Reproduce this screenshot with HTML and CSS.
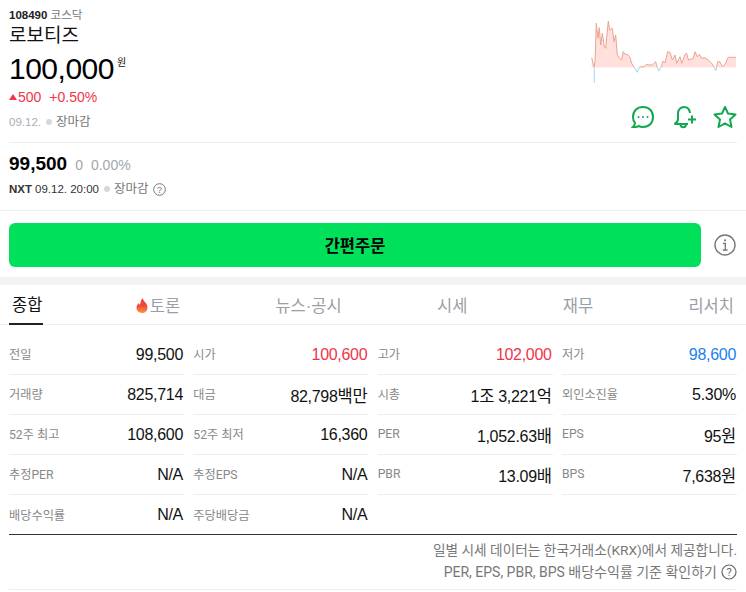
FILE: index.html
```html
<!DOCTYPE html>
<html lang="ko">
<head>
    <meta charset="UTF-8">
    <meta name="viewport" content="width=device-width, initial-scale=1.0">
    <title>로보티즈</title>
    <link rel="stylesheet" href="styles.css">
</head>
<body>

<section class="quote">
    <div class="quote-top">
        <div class="quote-info">
            <div class="code-line"><b>108490</b> <span>코스닥</span></div>
            <h1 class="stock-name">로보티즈</h1>
            <div class="price-line"><span class="price">100,000</span><span class="won">원</span></div>
            <div class="change-line"><i class="arrow-up"></i>500<span class="change-rate">+0.50%</span></div>
            <div class="status-line">09.12.<i class="dot"></i><span>장마감</span></div>
        </div>
        <div class="quote-side">
            <svg class="spark" width="146" height="64" viewBox="0 0 146 64">
                <path fill="#ffe0dc" d="M0.7 37.7 L3 47 L4 41.700 L5.300 3.300 L7 18.300 L8.300 7.700 L9.700 25 L11.300 13.300 L13.300 26.700 L14.700 28.300 L17.300 1 L18.700 10 L21.300 8.300 L23 21.700 L24.700 15 L26.300 35 L28.700 38.300 L30.700 40 L32.300 31.700 L34 34.300 L36.300 34.300 L38.700 36.700 L40.700 43.300 L43.300 47.500 L48 47.500 L50 46.700 L53 47 L55.300 44.300 L58 45 L61.300 45 L64.700 41.700 L66.300 47.500 L70 47.500 L72 41 L74 43 L76.700 31.700 L79 32.300 L81.300 40 L84 35 L85.700 43.300 L89 36.700 L90.700 43.300 L94 34.300 L95.700 33.300 L97.300 40 L102.300 38.300 L104 31.700 L106.300 36.700 L108.300 34.300 L110.700 38.300 L114 37.700 L117.300 40 L120.700 43.300 L123.300 47.500 L125.500 47.500 L126.700 41.700 L129 41.700 L131.300 46.700 L134 44.300 L137.300 37.300 L145 37.300 L145 47.500 L0.7 47.500 Z"/>
                <path fill="none" stroke="#eba58e" stroke-width="1" d="M0.7 37.7 L3 47 L4 41.700 L5.300 3.300 L7 18.300 L8.300 7.700 L9.700 25 L11.300 13.300 L13.300 26.700 L14.700 28.300 L17.300 1 L18.700 10 L21.300 8.300 L23 21.700 L24.700 15 L26.300 35 L28.700 38.300 L30.700 40 L32.300 31.700 L34 34.300 L36.300 34.300 L38.700 36.700 L40.700 43.300 L43.300 47.500 M48 47.500 L50 46.700 L53 47 L55.300 44.300 L58 45 L61.300 45 L64.700 41.700 L66.300 47.500 M70 47.500 L72 41 L74 43 L76.700 31.700 L79 32.300 L81.300 40 L84 35 L85.700 43.300 L89 36.700 L90.700 43.300 L94 34.300 L95.700 33.300 L97.300 40 L102.300 38.300 L104 31.700 L106.300 36.700 L108.300 34.300 L110.700 38.300 L114 37.700 L117.300 40 L120.700 43.300 L123.300 47.500 M125.500 47.500 L126.700 41.700 L129 41.700 L131.300 46.700 L134 44.300 L137.300 37.300 L145 37.300"/>
                <path fill="none" stroke="#a6d3f7" stroke-width="1" d="M3.300 47.500 L3.300 63 M43.300 47.500 L45 50 L46.300 52.300 L48 47.500 M66.300 47.500 L68 51 L69 49 L70 47.500 M123.300 47.500 L125 50.500 L125.500 47.500"/>
            </svg>
            <div class="quote-icons">
                <svg width="24" height="24" viewBox="0 0 24 24" fill="none" stroke="#12a84f" stroke-width="2">
                    <path d="M12 2 C6 2 2 6 2 12 C2 15 3 17 4 18 C4 20 3 21 2 22 C5 22 7 22 8 21 C9 22 11 22 12 22 C18 22 22 18 22 12 C22 6 18 2 12 2 Z"/>
                    <circle cx="7.500" cy="12" r="1" fill="#12a84f" stroke="none"/><circle cx="12" cy="12" r="1" fill="#12a84f" stroke="none"/><circle cx="16.500" cy="12" r="1" fill="#12a84f" stroke="none"/>
                </svg>
                <svg class="icon-bell" width="24" height="24" viewBox="0 0 24 24" fill="none" stroke="#12a84f" stroke-width="2">
                    <path d="M17 8 C16.500 4 14 2 11 2 C7.500 2 5 5 5 8.500 L5 14 C5 16.500 3.500 18 1.500 19 L15 19"/>
                    <path d="M7.500 19.500 C7.500 23 13 23 13 19.500"/>
                    <path d="M15 14.500 L23 14.500 M19 10.500 L19 18.500"/>
                </svg>
                <svg class="icon-star" width="24" height="24" viewBox="0 0 24 24" fill="none" stroke="#12a84f" stroke-width="2" stroke-linejoin="round">
                    <path d="M12 2 L15 8.500 L22.500 9.500 L17 14.500 L18.500 22 L12 18.300 L5.500 22 L7 14.500 L1.500 9.500 L9 8.500 Z"/>
                </svg>
            </div>
        </div>
    </div>
    <div class="nxt">
        <div class="nxt-price"><b>99,500</b><span>0</span><span>0.00%</span></div>
        <div class="nxt-status"><b>NXT</b> 09.12. 20:00<i class="dot"></i><span>장마감</span>
            <svg class="help" width="13" height="13" viewBox="0 0 13 13"><circle cx="6.500" cy="6.500" r="5.800" fill="none" stroke="#777" stroke-width="1"/><text x="6.500" y="9.500" text-anchor="middle" class="help-mark">?</text></svg>
        </div>
    </div>
</section>

<section class="order">
    <button class="order-btn">간편주문</button>
    <svg width="22" height="22" viewBox="0 0 22 22"><circle cx="11" cy="11" r="10" fill="none" stroke="#777" stroke-width="1.400"/><path fill="none" stroke="#777" stroke-width="1.300" d="M9 9.500 L11.300 9.500 L11.300 16 M8.800 16 L13.600 16"/><circle cx="11" cy="6.300" r="1.100" fill="#777"/></svg>
</section>

<nav class="tabs">
    <a class="tab active">종합</a>
    <a class="tab"><svg class="flame" width="12" height="15" viewBox="0 0 12 15"><defs><linearGradient id="flame" x1="0" y1="0" x2="0" y2="1"><stop offset="0.500" stop-color="#f2453b"/><stop offset="1" stop-color="#f79a3c"/></linearGradient></defs><path fill="url(#flame)" d="M6.500 0 C7 3 11.500 5 11.500 9.500 C11.500 13 9 15 6 15 C3 15 .5 13 .5 9.800 C.5 7.500 2 6 2.800 5 C3 6 3.500 6.500 4 6.800 C4.500 4.500 5 2 6.500 0 Z"/></svg>토론</a>
    <a class="tab">뉴스·공시</a>
    <a class="tab">시세</a>
    <a class="tab">재무</a>
    <a class="tab">리서치</a>
</nav>

<section class="stats">
    <div class="stat"><span>전일</span><b>99,500</b></div>
    <div class="stat"><span>시가</span><b class="up">100,600</b></div>
    <div class="stat"><span>고가</span><b class="up">102,000</b></div>
    <div class="stat"><span>저가</span><b class="down">98,600</b></div>
    <div class="stat"><span>거래량</span><b>825,714</b></div>
    <div class="stat"><span>대금</span><b>82,798<em>백만</em></b></div>
    <div class="stat"><span>시총</span><b>1<em>조</em> 3,221<em>억</em></b></div>
    <div class="stat"><span>외인소진율</span><b>5.30%</b></div>
    <div class="stat"><span>52주 최고</span><b>108,600</b></div>
    <div class="stat"><span>52주 최저</span><b>16,360</b></div>
    <div class="stat"><span>PER</span><b>1,052.63<em>배</em></b></div>
    <div class="stat"><span>EPS</span><b>95<em>원</em></b></div>
    <div class="stat"><span>추정PER</span><b>N/A</b></div>
    <div class="stat"><span>추정EPS</span><b>N/A</b></div>
    <div class="stat"><span>PBR</span><b>13.09<em>배</em></b></div>
    <div class="stat"><span>BPS</span><b>7,638<em>원</em></b></div>
    <div class="stat last"><span>배당수익률</span><b>N/A</b></div>
    <div class="stat last"><span>주당배당금</span><b>N/A</b></div>
</section>

<footer class="notes">
    <p>일별 시세 데이터는 한국거래소(KRX)에서 제공합니다.</p>
    <p class="notes-basis">PER, EPS, PBR, BPS 배당수익률 기준 확인하기
        <svg width="16" height="16" viewBox="0 0 16 16"><circle cx="8" cy="8" r="7" fill="none" stroke="#666" stroke-width="1.200"/><text x="8" y="12" text-anchor="middle" class="note-mark">?</text></svg>
    </p>
</footer>

</body>
</html>
```

FILE: styles.css
```css
* {
    box-sizing: border-box;
}

body {
    margin: 0;
    background: #fff;
    color: #111;
    font-family: "Liberation Sans", "Noto Sans CJK KR", sans-serif;
    height: 592px;
    overflow: hidden;
}

.quote {
    padding: 0 9px;
    height: 211px;
    border-bottom: 1px solid #eceef0;
}

.quote-top {
    display: flex;
    justify-content: space-between;
    height: 143px;
    border-bottom: 1px solid #eceef0;
}

.code-line {
    font-size: 11.500px;
    line-height: 14px;
    padding-top: 8px;
    color: #222;
}

.code-line b {
    font-weight: 700;
}

.code-line span {
    color: #777;
}

.stock-name {
    margin: 1px 0 0;
    font-size: 19px;
    font-weight: 400;
    line-height: 26px;
    color: #111;
}

.price-line {
    display: flex;
    align-items: flex-start;
    margin-top: 2px;
}

.price {
    font-size: 30px;
    line-height: 36px;
    letter-spacing: -0.5px;
    color: #000;
}

.won {
    font-size: 10px;
    line-height: 14px;
    margin: 5px 0 0 3px;
}

.change-line {
    display: flex;
    align-items: center;
    margin-top: 1px;
    font-size: 14px;
    line-height: 18px;
    color: #f0354a;
}

.arrow-up {
    width: 0;
    height: 0;
    border-left: 4px solid transparent;
    border-right: 4px solid transparent;
    border-bottom: 6px solid #f0354a;
    margin: 0 1px 0 0;
}

.change-rate {
    margin-left: 8px;
}

.status-line {
    display: flex;
    align-items: center;
    margin-top: 7px;
    font-size: 11.500px;
    line-height: 18px;
    color: #a9adb5;
}

.status-line span {
    font-size: 12.500px;
    color: #777;
}

.dot {
    width: 6px;
    height: 6px;
    border-radius: 50%;
    background: #d5d6de;
    margin: 0 4px 0 5px;
}

.quote-side {
    display: flex;
    flex-direction: column;
    align-items: flex-end;
    width: 150px;
}

.spark {
    display: block;
    margin-top: 20px;
}

.quote-icons {
    display: flex;
    margin-top: 21px;
}

.icon-bell {
    margin-left: 18px;
}

.icon-star {
    margin-left: 16px;
}

.nxt {
    padding-top: 9px;
}

.nxt-price {
    display: flex;
    align-items: baseline;
    font-size: 14px;
    line-height: 24px;
    color: #a0a6ae;
}

.nxt-price b {
    font-size: 19px;
    font-weight: 700;
    color: #000;
    margin-right: 8px;
}

.nxt-price span {
    margin-right: 8px;
}

.nxt-status {
    display: flex;
    align-items: center;
    margin-top: 3px;
    font-size: 11.500px;
    line-height: 18px;
    color: #333;
}

.nxt-status b {
    margin-right: 3px;
}

.nxt-status span {
    font-size: 12.500px;
    color: #777;
}

.help {
    margin-left: 5px;
}

.help-mark {
    font-size: 9px;
    fill: #777;
}

.order {
    display: flex;
    align-items: flex-start;
    justify-content: space-between;
    padding: 12px 10px 10px 9px;
    height: 74px;
    border-bottom: 8px solid #f2f3f5;
}

.order svg {
    margin-top: 11px;
}

.order-btn {
    width: 692px;
    height: 44px;
    border: none;
    border-radius: 6px;
    background: #00e05a;
    color: #000;
    font-family: inherit;
    font-size: 16.500px;
    font-weight: 700;
}

.tabs {
    display: flex;
    justify-content: space-between;
    padding: 0 9px;
    height: 40px;
    border-bottom: 1px solid #eceef0;
}

.tab {
    display: flex;
    align-items: center;
    height: 40px;
    font-size: 16.500px;
    color: #9a9ea6;
    padding: 0 3px;
}

.flame {
    margin-right: 2px;
}

.tab.active {
    color: #111;
    padding: 0 1px 0 3px;
    border-bottom: 2px solid #222;
}

.stats {
    display: grid;
    grid-template-columns: repeat(4, 175px);
    grid-auto-rows: 40px;
    column-gap: 9.330px;
    padding: 10px 9px 0;
    height: 209px;
}

.stat {
    display: flex;
    align-items: center;
    justify-content: space-between;
    height: 40px;
    border-bottom: 1px solid #eceef0;
}

.stat.last {
    border-bottom: none;
}

.stat span {
    font-family: Roboto, "Noto Sans CJK KR", sans-serif;
    font-size: 12.200px;
    padding-bottom: 1px;
    color: #888;
}

.stat b {
    font-size: 16px;
    letter-spacing: -0.3px;
    padding-right: 1px;
    font-weight: 400;
    color: #111;
}

.stat em {
    font-style: normal;
    font-size: 16.500px;
}

.stat b.up {
    color: #f0354a;
}

.stat b.down {
    color: #1a82f0;
}

.notes {
    margin: 0 9px;
    padding-top: 4px;
    height: 56px;
    border-top: 1px solid #333;
    border-bottom: 1px solid #eceef0;
    font-family: Roboto, "Noto Sans CJK KR", sans-serif;
    font-size: 13.700px;
    color: #777;
}

.notes p {
    margin: 0;
    line-height: 22px;
    display: flex;
    align-items: center;
    justify-content: flex-end;
    gap: 4px;
}

.notes .notes-basis {
    font-size: 14px;
}

.note-mark {
    font-size: 11px;
    fill: #666;
}
```
